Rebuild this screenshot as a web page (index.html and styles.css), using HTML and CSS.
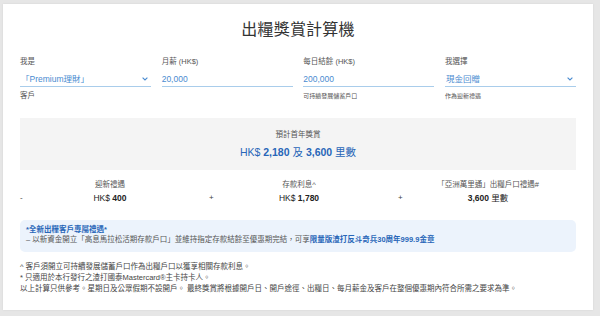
FILE: index.html
```html
<!DOCTYPE html>
<html lang="zh-Hant">
<head>
<meta charset="utf-8">
<title>出糧獎賞計算機</title>
<link rel="stylesheet" href="styles.css">
</head>
<body>
<div class="card">
  <h1 class="title">出糧獎賞計算機</h1>

  <div class="fields">
    <div class="field">
      <div class="label">我是</div>
      <div class="control select">
        <span class="value">「Premium理財」</span>
        <svg class="chev" width="6" height="4" viewBox="0 0 6 4"><polyline points="0.6,0.6 3,3 5.4,0.6" fill="none" stroke="#4a8bd0" stroke-width="1.1"/></svg>
      </div>
      <div class="helper helper-lg">客戶</div>
    </div>
    <div class="field">
      <div class="label">月薪 (HK$)</div>
      <div class="control input"><span class="value">20,000</span></div>
    </div>
    <div class="field">
      <div class="label">每日結餘 (HK$)</div>
      <div class="control input"><span class="value">200,000</span></div>
      <div class="helper">可持續發展儲蓄戶口</div>
    </div>
    <div class="field">
      <div class="label">我選擇</div>
      <div class="control select">
        <span class="value">現金回贈</span>
        <svg class="chev" width="6" height="4" viewBox="0 0 6 4"><polyline points="0.6,0.6 3,3 5.4,0.6" fill="none" stroke="#4a8bd0" stroke-width="1.1"/></svg>
      </div>
      <div class="helper">作為迎新禮遇</div>
    </div>
  </div>

  <div class="summary">
    <div class="summary-label">預計首年獎賞</div>
    <div class="summary-value">HK$ <b>2,180</b> 及 <b>3,600</b> 里數</div>
  </div>

  <div class="breakdown">
    <div class="group g1">
      <span class="sign">-</span>
      <div class="item">
        <div class="item-label">迎新禮遇</div>
        <div class="item-value">HK$ <b>400</b></div>
      </div>
    </div>
    <div class="group g2">
      <span class="sign">+</span>
      <div class="item">
        <div class="item-label">存款利息^</div>
        <div class="item-value">HK$ <b>1,780</b></div>
      </div>
    </div>
    <div class="group g3">
      <span class="sign">+</span>
      <div class="item">
        <div class="item-label">「亞洲萬里通」出糧戶口禮遇#</div>
        <div class="item-value"><b>3,600</b> 里數</div>
      </div>
    </div>
  </div>

  <div class="notice">
    <div class="notice-title">*全新出糧客戶專屬禮遇*</div>
    <div class="notice-text">– 以新資金開立「高息馬拉松活期存款戶口」並維持指定存款結餘至優惠期完結，可享<span class="hl">限量版渣打反斗奇兵30周年999.9金章</span></div>
  </div>

  <div class="notes">
    <p>^ 客戶須開立可持續發展儲蓄戶口作為出糧戶口以獲享相關存款利息。</p>
    <p>* 只適用於本行發行之渣打國泰Mastercard®主卡持卡人。</p>
    <p>以上計算只供參考。星期日及公眾假期不設開戶。 最終獎賞將根據開戶日、開戶途徑、出糧日、每月薪金及客戶在整個優惠期內符合所需之要求為準。</p>
  </div>
</div>
</body>
</html>
```

FILE: styles.css
```css
* { box-sizing: border-box; }

html, body {
  margin: 0;
  padding: 0;
}

body {
  width: 600px;
  height: 316px;
  overflow: hidden;
  background: #e6e6e6;
  font-family: "Liberation Sans", "Noto Sans CJK TC", sans-serif;
  color: #444;
}

.card {
  margin: 4px 7px 0 3px;
  width: 590px;
  height: 306px;
  background: #ffffff;
  padding: 17px 17px 0 17px;
  box-shadow: 0 0 2px rgba(0,0,0,0.08);
}

.title {
  margin: 0;
  font-size: 16px;
  line-height: 18px;
  font-weight: 400;
  text-align: center;
  color: #333;
  letter-spacing: 0.2px;
}

.fields {
  margin-top: 18px;
  display: grid;
  grid-template-columns: repeat(4, 1fr);
  column-gap: 10.67px;
}

.label {
  font-size: 7.5px;
  line-height: 10px;
  color: #555;
}

.control {
  display: flex;
  align-items: center;
  padding-top: 6px;
  padding-bottom: 1px;
  border-bottom: 1px solid #a9cdeb;
}

.control .value {
  flex: 1;
  font-size: 8.5px;
  line-height: 12px;
  color: #4a8bd0;
}

.select .value { padding-left: 1px; }
.select:last-of-type .value { }

.chev {
  margin-right: 3px;
  flex: none;
}

.helper {
  margin-top: 4px;
  font-size: 6px;
  line-height: 10px;
  color: #555;
}

.helper-lg {
  font-size: 7.5px;
  color: #555;
}

.summary {
  margin-top: 17px;
  height: 52px;
  background: #f4f4f4;
  padding-top: 12px;
  text-align: center;
}

.summary-label {
  font-size: 7.5px;
  line-height: 10px;
  color: #555;
}

.summary-value {
  margin-top: 5px;
  font-size: 10.5px;
  line-height: 14px;
  color: #2866b8;
}

.summary-value b { font-weight: 700; }

.breakdown {
  margin-top: 10px;
  display: grid;
  grid-template-columns: 189px 189px 178px;
}

.group {
  display: flex;
  align-items: flex-start;
}

.sign {
  width: 8px;
  flex: none;
  margin-top: 12px;
  font-size: 8px;
  line-height: 12px;
  color: #444;
}

.item {
  width: 164px;
  text-align: center;
}

.item-label {
  font-size: 7.5px;
  line-height: 10px;
  color: #555;
}

.item-value {
  margin-top: 2px;
  font-size: 8.5px;
  line-height: 12px;
  color: #222;
}

.item-value b { font-weight: 700; }

.notice {
  margin-top: 16px;
  background: #ecf3fc;
  border-radius: 5px;
  padding: 5px 6px 7px 6px;
  height: 32px;
}

.notice-title {
  font-size: 7.5px;
  line-height: 10px;
  font-weight: 700;
  color: #2866b8;
}

.notice-text {
  font-size: 7.5px;
  line-height: 10px;
  color: #555;
  white-space: nowrap;
}

.hl {
  color: #2866b8;
  font-weight: 700;
}

.notes {
  margin-top: 9px;
}

.notes p {
  margin: 0;
  font-size: 7.5px;
  line-height: 11px;
  color: #444;
  white-space: nowrap;
}
```
